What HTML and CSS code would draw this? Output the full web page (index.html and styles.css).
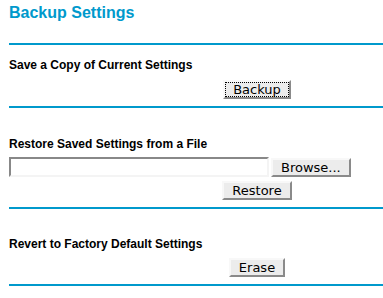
FILE: index.html
```html
<!DOCTYPE html>
<html>
<head>
    <title>Backup Settings</title>
    <link rel="stylesheet" href="styles.css">
    <meta charset="UTF-8" />
</head>
<body>
<div class="page">
    <h1 class="page_title">Backup Settings</h1>
    <div class="rule"></div>

    <div class="section">
        <div class="label">Save a Copy of Current Settings</div>
        <div class="button_row backup_row">
            <button class="btn focused">Backup</button>
        </div>
    </div>
    <div class="rule"></div>

    <div class="section restore">
        <div class="label">Restore Saved Settings from a File</div>
        <div class="file_row">
            <div class="file_box"></div>
            <button class="btn">Browse...</button>
        </div>
        <div class="button_row">
            <button class="btn">Restore</button>
        </div>
    </div>
    <div class="rule"></div>

    <div class="section erase">
        <div class="label">Revert to Factory Default Settings</div>
        <div class="button_row erase_row">
            <button class="btn">Erase</button>
        </div>
    </div>
    <div class="rule"></div>
</div>
</body>
</html>
```

FILE: styles.css
```css
html, body {
margin: 0;
padding: 0;
background: white;
overflow: hidden;
}

.page {
padding-left: 9px;
width: 374px;
display: flex;
flex-direction: column;
font-family: "Liberation Sans", Arial, sans-serif;
}

.page_title {
margin: 0;
padding-top: 3px;
height: 40px;
font-size: 16px;
line-height: 20px;
font-weight: bold;
color: #0099cc;
}

.rule {
height: 2px;
background-color: #0099cc;
}

.section {
display: flex;
flex-direction: column;
padding-top: 14px;
height: 47px;
}

.label {
font-size: 12px;
font-weight: bold;
line-height: 13px;
color: black;
}

.button_row {
display: flex;
justify-content: center;
padding-left: 122px;
margin-top: 8px;
}

.btn {
font-family: "DejaVu Sans", sans-serif;
font-size: 13px;
line-height: 15px;
height: 19px;
padding: 0 8px;
margin: 0;
color: black;
background-color: #ececec;
border: 2px solid;
border-color: #f8f8f8 #8a8a8a #8a8a8a #f8f8f8;
border-radius: 0;
}

.focused {
outline: 1px dotted black;
outline-offset: -3px;
}

.restore {
padding-top: 30px;
height: 69px;
}

.file_row {
display: flex;
margin-top: 6px;
}

.file_box {
width: 256px;
height: 16px;
border: 2px solid;
border-color: #888 #f4f4f4 #f4f4f4 #888;
margin-right: 2px;
}

.file_row .btn {
margin-top: 1px;
}

.restore .button_row {
margin-top: 4px;
}

.erase {
padding-top: 29px;
height: 46px;
}

.erase_row {
margin-top: 7px;
}
```
